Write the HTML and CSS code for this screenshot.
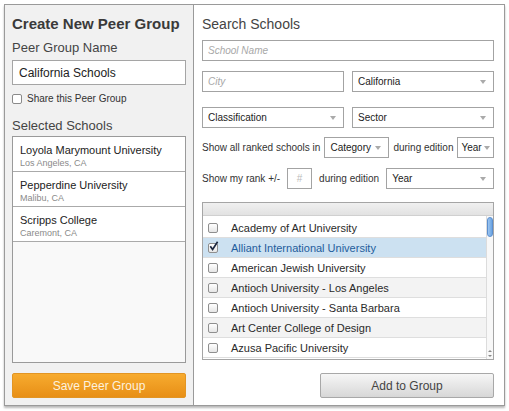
FILE: index.html
```html
<!DOCTYPE html>
<html>
<head>
<meta charset="utf-8">
<link rel="stylesheet" href="styles.css">
</head>
<body>
<div class="frame">
  <div class="left">
    <h1 class="title">Create New Peer Group</h1>
    <div class="label">Peer Group Name</div>
    <div class="text-input">California Schools</div>
    <div class="share"><span class="cb"></span>Share this Peer Group</div>
    <div class="label sel-label">Selected Schools</div>
    <div class="selected">
      <div class="item"><div class="name">Loyola Marymount University</div><div class="loc">Los Angeles, CA</div></div>
      <div class="item"><div class="name">Pepperdine University</div><div class="loc">Malibu, CA</div></div>
      <div class="item"><div class="name">Scripps College</div><div class="loc">Caremont, CA</div></div>
    </div>
    <div class="btn btn-orange">Save Peer Group</div>
  </div>
  <div class="right">
    <h2 class="r-title">Search Schools</h2>
    <div class="field school"><span class="ph">School Name</span></div>
    <div class="row row2">
      <div class="field half"><span class="ph">City</span></div>
      <div class="field half select"><span>California</span><span class="arrow"></span></div>
    </div>
    <div class="row row3">
      <div class="field half select"><span>Classification</span><span class="arrow"></span></div>
      <div class="field half select"><span>Sector</span><span class="arrow"></span></div>
    </div>
    <div class="row row4">
      <span class="txt">Show all ranked schools in</span>
      <div class="field select cat"><span>Category</span><span class="arrow"></span></div>
      <span class="txt">during edition</span>
      <div class="field select year-sm"><span>Year</span><span class="arrow"></span></div>
    </div>
    <div class="row row5">
      <span class="txt">Show my rank +/-</span>
      <div class="field hash">#</div>
      <span class="txt">during edition</span>
      <div class="field select grow"><span>Year</span><span class="arrow"></span></div>
    </div>
    <div class="list">
      <div class="list-head"></div>
      <div class="list-body">
        <div class="rows">
          <div class="r-item"><span class="box"></span>Academy of Art University</div>
          <div class="r-item sel"><span class="box"><svg width="12" height="12" viewBox="0 0 12 12"><path d="M2.3 5.2 L4.6 8.4 L9.6 0.8" fill="none" stroke="#1b2740" stroke-width="1.7"/></svg></span>Alliant International University</div>
          <div class="r-item"><span class="box"></span>American Jewish University</div>
          <div class="r-item alt"><span class="box"></span>Antioch University - Los Angeles</div>
          <div class="r-item"><span class="box"></span>Antioch University - Santa Barbara</div>
          <div class="r-item alt"><span class="box"></span>Art Center College of Design</div>
          <div class="r-item"><span class="box"></span>Azusa Pacific University</div>
        </div>
        <div class="scroll">
          <div class="thumb"></div>
          <div class="arrows"><span class="up"></span><span class="down"></span></div>
        </div>
      </div>
    </div>
    <div class="btn btn-gray">Add to Group</div>
  </div>
</div>
</body>
</html>
```

FILE: styles.css
```css
* { box-sizing: border-box; }
body {
  margin: 0;
  background: #fff;
  font-family: "Liberation Sans", Arial, Helvetica, sans-serif;
  color: #333;
}
.frame {
  margin: 4px;
  width: 501px;
  height: 402px;
  border: 1px solid #9a9a9a;
  display: flex;
  background: #fff;
  box-shadow: 0 2px 2px rgba(0,0,0,0.28);
}
.left {
  width: 189px;
  background: #f1f1f1;
  border-right: 1px solid #9a9a9a;
  padding: 9px 7px 0;
  display: flex;
  flex-direction: column;
}
.title {
  margin: 0;
  font-size: 15px;
  line-height: 20px;
  font-weight: bold;
  color: #3a3a3a;
}
.label {
  margin-top: 6px;
  font-size: 13px;
  line-height: 16px;
  color: #444;
}
.text-input {
  margin-top: 4px;
  height: 25px;
  border: 1px solid #a5a5a5;
  background: #fff;
  padding: 1px 6px 0;
  font-size: 12px;
  line-height: 22px;
  color: #222;
}
.share {
  margin-top: 7px;
  display: flex;
  align-items: center;
  gap: 5px;
  font-size: 10px;
  line-height: 14px;
  color: #333;
}
.cb {
  width: 10px;
  height: 10px;
  border: 1px solid #8a8a8a;
  border-radius: 2px;
  background: #fff;
}
.sel-label { margin-top: 12px; }
.selected {
  margin-top: 2px;
  height: 227px;
  border: 1px solid #9a9a9a;
  background: #f9f9f9;
}
.item {
  height: 35px;
  border-bottom: 1px solid #aaa;
  background: #fff;
  padding: 6px 7px 0;
}
.name { font-size: 11px; line-height: 14px; color: #222; }
.loc { font-size: 9px; line-height: 12px; color: #8a8a8a; }
.btn {
  height: 25px;
  border-radius: 2px;
  font-size: 12px;
  display: flex;
  align-items: center;
  justify-content: center;
}
.btn-orange {
  margin-top: 10px;
  background: linear-gradient(#f7ab2f, #e88f16);
  border: 1px solid #e29524;
  color: #fdf1de;
}
.right {
  flex: 1;
  padding: 10px 10px 0 8px;
  display: flex;
  flex-direction: column;
}
.r-title {
  margin: 0;
  font-size: 14px;
  font-weight: normal;
  line-height: 18px;
  color: #444;
}
.field {
  height: 21px;
  border: 1px solid #a3a3a3;
  background: #fff;
  font-size: 10px;
  color: #222;
  padding: 0 5px;
  display: flex;
  align-items: center;
}
.ph { color: #a8a8a8; font-style: italic; }
.school { margin-top: 7px; }
.row { display: flex; align-items: center; }
.row2 { margin-top: 10px; gap: 8px; }
.row3 { margin-top: 15px; gap: 8px; }
.row4 { margin-top: 9px; gap: 4px; }
.row5 { margin-top: 10px; gap: 7px; }
.half { width: 142px; }
.select { justify-content: space-between; padding-right: 7px; }
.arrow {
  width: 0;
  height: 0;
  border-left: 3px solid transparent;
  border-right: 3px solid transparent;
  border-top: 4px solid #aaa;
}
.txt { font-size: 10px; color: #333; white-space: nowrap; }
.cat { width: 65px; }
.year-sm { flex: 1; padding: 0 3px; }
.hash { width: 25px; justify-content: center; color: #bbb; }
.grow { flex: 1; }
.list {
  margin-top: 13px;
  height: 158px;
  border: 1px solid #a5a5a5;
  display: flex;
  flex-direction: column;
}
.list-head {
  height: 13px;
  background: linear-gradient(#f0f0f0, #e2e2e2);
  border-bottom: 1px solid #d0d0d0;
}
.list-body { flex: 1; display: flex; }
.rows { flex: 1; padding-top: 2px; }
.r-item {
  height: 20px;
  display: flex;
  align-items: center;
  padding: 1px 0 0 5px;
  border-bottom: 1px solid #dedede;
  font-size: 11px;
  color: #2a2a2a;
  white-space: nowrap;
}
.r-item.alt { background: #f3f3f3; }
.r-item.sel { background: #cce1f1; color: #1f5d9c; }
.box {
  width: 10px;
  height: 10px;
  margin-right: 13px;
  border: 1px solid #8f8f8f;
  border-radius: 2px;
  background: linear-gradient(#fff, #e6e6e6);
  position: relative;
}
.box svg { position: absolute; left: -1px; top: -3px; }
.scroll {
  width: 7px;
  border-left: 1px solid #dcdcdc;
  background: #f8f8f8;
  display: flex;
  flex-direction: column;
  justify-content: space-between;
  align-items: center;
  padding: 1px 0 2px;
}
.thumb {
  width: 6px;
  height: 20px;
  border-radius: 3px;
  border: 1px solid #5c8fcf;
  background: linear-gradient(90deg, #9cc5f0, #6aa3e2);
}
.arrows { display: flex; flex-direction: column; gap: 3px; align-items: center; }
.up, .down { width: 0; height: 0; border-left: 2px solid transparent; border-right: 2px solid transparent; }
.up { border-bottom: 2px solid #888; }
.down { border-top: 2px solid #888; }
.btn-gray {
  margin-top: 13px;
  align-self: flex-end;
  width: 174px;
  background: linear-gradient(#f6f6f6, #d7d7d7);
  border: 1px solid #a8a8a8;
  color: #444;
}
```
